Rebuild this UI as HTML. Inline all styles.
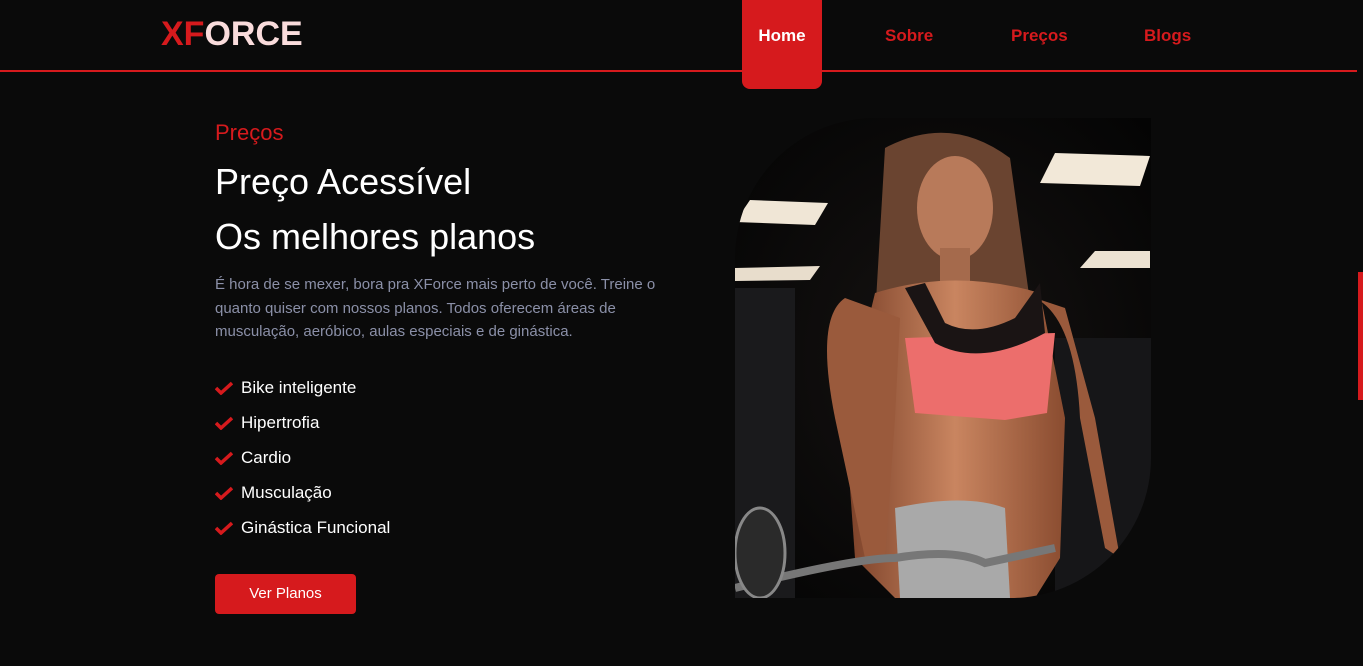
<!DOCTYPE html>
<html><head><meta charset="utf-8">
<style>
*{margin:0;padding:0;box-sizing:border-box}
body{width:1363px;height:666px;background:#0a0a0a;font-family:"Liberation Sans",sans-serif;position:relative;overflow:hidden}
.logo{position:absolute;left:161px;top:15px;font-size:34px;font-weight:bold;color:#fadcdc}
.logo span{color:#d61a1d}
.line{position:absolute;left:0;top:70px;width:1357px;height:2px;background:#d61a1d}
.home{position:absolute;left:742px;top:0;width:80px;height:89px;background:#d61a1d;border-radius:0 0 8px 8px;color:#fff;font-size:17px;font-weight:bold;text-align:center;padding-top:26px}
.nav{position:absolute;top:26px;font-size:17px;font-weight:bold;color:#d61a1d}
.sb{position:absolute;right:0;top:272px;width:5px;height:128px;background:#d61a1d}
.sub{position:absolute;left:215px;top:120px;font-size:22px;color:#d61a1d}
.h{position:absolute;left:215px;font-size:36px;color:#fff}
.p{position:absolute;left:215px;top:273px;width:470px;font-size:15px;line-height:23.5px;color:#8b90a8}
ul{position:absolute;left:215px;top:378px;list-style:none}
li{height:35px;font-size:17px;color:#fff;display:flex;align-items:flex-start}
li svg{margin:3px 8px 0 0}
.btn{position:absolute;left:215px;top:574px;width:141px;height:40px;background:#d61a1d;border-radius:4px;color:#fff;font-size:15px;text-align:center;line-height:40px}
</style></head><body>
<div class="logo"><span>XF</span>ORCE</div>
<div class="line"></div>
<div class="home">Home</div>
<div class="nav" style="left:885px">Sobre</div>
<div class="nav" style="left:1011px">Preços</div>
<div class="nav" style="left:1144px">Blogs</div>
<div class="sb"></div>
<div class="sub">Preços</div>
<div class="h" style="top:161px">Preço Acessível</div>
<div class="h" style="top:216px">Os melhores planos</div>
<div class="p">É hora de se mexer, bora pra XForce mais perto de você. Treine o quanto quiser com nossos planos. Todos oferecem áreas de musculação, aeróbico, aulas especiais e de ginástica.</div>
<ul>
<li><svg width="18" height="14" viewBox="0 0 18 14"><path d="M1 7l5 5L17 2" stroke="#d61a1d" stroke-width="3.5" fill="none"/></svg>Bike inteligente</li>
<li><svg width="18" height="14" viewBox="0 0 18 14"><path d="M1 7l5 5L17 2" stroke="#d61a1d" stroke-width="3.5" fill="none"/></svg>Hipertrofia</li>
<li><svg width="18" height="14" viewBox="0 0 18 14"><path d="M1 7l5 5L17 2" stroke="#d61a1d" stroke-width="3.5" fill="none"/></svg>Cardio</li>
<li><svg width="18" height="14" viewBox="0 0 18 14"><path d="M1 7l5 5L17 2" stroke="#d61a1d" stroke-width="3.5" fill="none"/></svg>Musculação</li>
<li><svg width="18" height="14" viewBox="0 0 18 14"><path d="M1 7l5 5L17 2" stroke="#d61a1d" stroke-width="3.5" fill="none"/></svg>Ginástica Funcional</li>
</ul>
<div class="btn">Ver Planos</div>
<svg style="position:absolute;left:735px;top:118px" width="416" height="480" viewBox="0 0 416 480">
<defs>
<clipPath id="c"><path d="M140 0H416V340A140 140 0 0 1 276 480H0V140A140 140 0 0 1 140 0Z"/></clipPath>
<radialGradient id="bg" cx="0.5" cy="0.5" r="0.7"><stop offset="0" stop-color="#161312"/><stop offset="1" stop-color="#040404"/></radialGradient>
<linearGradient id="sk" x1="0" y1="0" x2="1" y2="0"><stop offset="0" stop-color="#7a4028"/><stop offset=".5" stop-color="#c98560"/><stop offset="1" stop-color="#8a4c30"/></linearGradient>
</defs>
<g clip-path="url(#c)">
<rect width="416" height="480" fill="url(#bg)"/>
<polygon points="15,82 93,85 80,107 0,104" fill="#f0e6d6"/>
<polygon points="0,150 85,148 75,162 0,163" fill="#e8ddcc"/>
<polygon points="320,35 415,38 405,68 305,65" fill="#f2e8d8"/>
<polygon points="360,133 415,133 415,150 345,150" fill="#ece2d2"/>
<rect x="0" y="170" width="60" height="310" fill="#1a1a1c"/>
<rect x="320" y="220" width="96" height="260" fill="#161618"/>
<path d="M150 30Q215-5 275 40L300 220L310 330L130 330L140 200Z" fill="#6a4430"/>
<ellipse cx="220" cy="90" rx="38" ry="52" fill="#b87a5a"/>
<rect x="205" y="130" width="30" height="50" fill="#a56a4c"/>
<path d="M140 175Q220 150 305 175L330 300L325 440L300 480H160L120 440L110 300Z" fill="url(#sk)"/>
<path d="M110 180Q80 200 100 300L130 440L150 440L160 300L165 200Z" fill="#9a5a3c"/>
<path d="M300 180Q340 200 345 300L370 430L385 440L360 300L330 190Z" fill="#9a5a3c"/>
<path d="M170 220L320 215L312 295L270 302L180 295Z" fill="#ec6e6c"/>
<path d="M170 170L200 225Q245 250 310 215L305 165L280 200Q240 220 210 205L190 165Z" fill="#1a1414"/>
<path d="M160 390Q230 375 270 390L275 480H165Z" fill="#a9a9a9"/>
<path d="M0 470Q120 440 160 440Q220 430 250 445L320 430" stroke="#777" stroke-width="8" fill="none"/>
<ellipse cx="25" cy="435" rx="25" ry="45" fill="#2a2a2a" stroke="#888" stroke-width="3"/>
</g>
</svg>
</body></html>
